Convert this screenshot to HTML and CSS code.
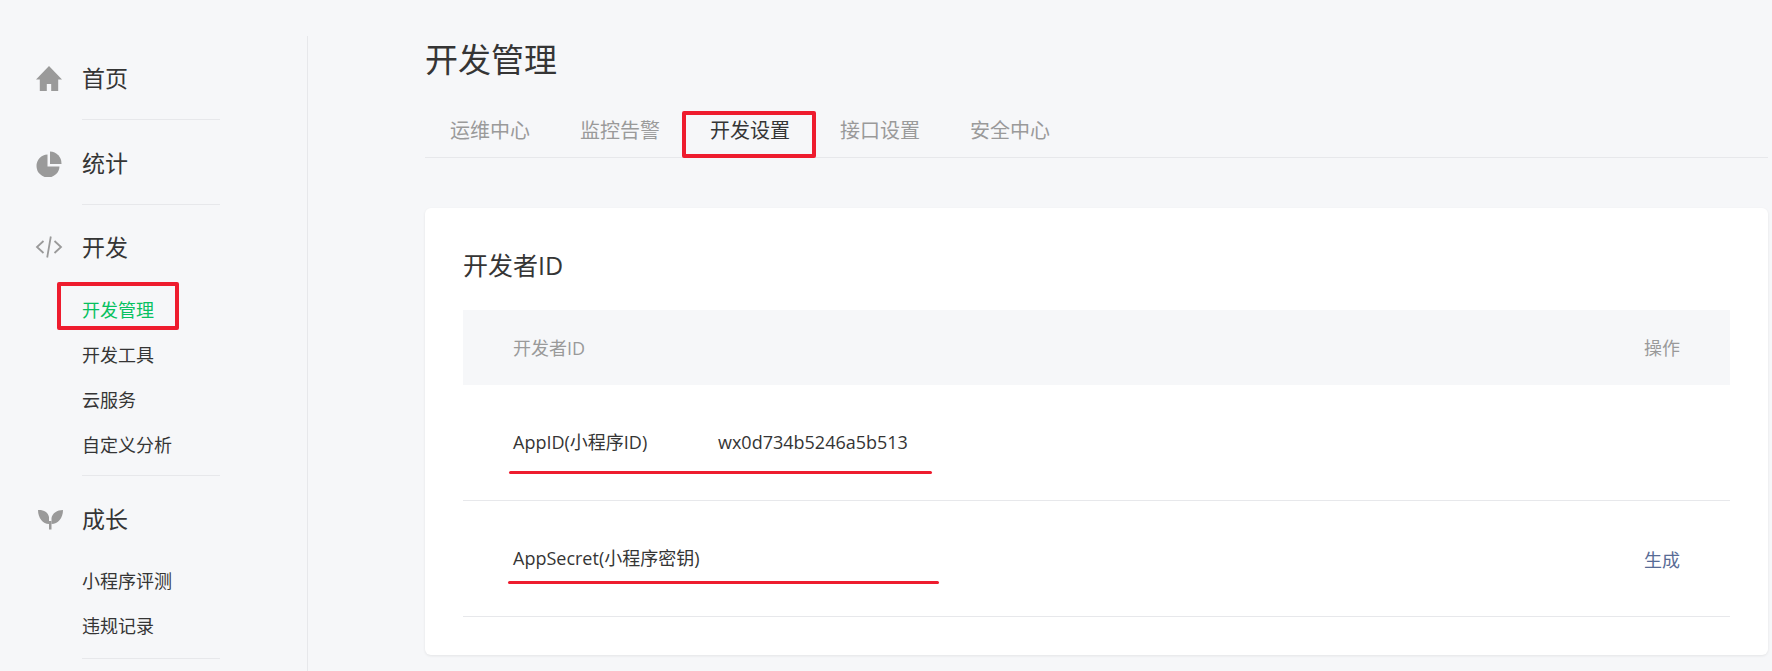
FILE: index.html
```html
<!DOCTYPE html>
<html lang="zh-CN">
<head>
<meta charset="utf-8">
<title>开发管理</title>
<link rel="stylesheet" href="styles.css">
</head>
<body>
<div class="page">
  <aside class="sidebar">
    <section class="nav-group">
      <div class="nav-head">
        <svg class="nav-icon" viewBox="0 0 28 28"><path d="M14 2 1 15.500h3.800V27h7v-7h4.400v7h7V15.500H27z" fill="#9a9a9a"/></svg>
        <span>首页</span>
      </div>
    </section>
    <section class="nav-group">
      <div class="nav-head">
        <svg class="nav-icon" viewBox="0 0 28 28"><path d="M12.500 5.500a11.500 11.500 0 1 0 12 12h-12z" fill="#9a9a9a"/><path d="M15 2.500V15h11.500A12 12 0 0 0 15 2.500z" fill="#9a9a9a"/></svg>
        <span>统计</span>
      </div>
    </section>
    <section class="nav-group">
      <div class="nav-head">
        <svg class="nav-icon" viewBox="0 0 28 28"><path d="M8.500 8 2 14l6.500 6M19.500 8l6.500 6-6.500 6M15.800 3.500l-3.600 21" fill="none" stroke="#9a9a9a" stroke-width="1.800"/></svg>
        <span>开发</span>
      </div>
      <ul class="nav-sub nav-sub-dev">
        <li class="nav-item active">开发管理</li>
        <li class="nav-item">开发工具</li>
        <li class="nav-item">云服务</li>
        <li class="nav-item">自定义分析</li>
      </ul>
    </section>
    <section class="nav-group">
      <div class="nav-head">
        <svg class="nav-icon" viewBox="0 0 28 28"><path d="M3 5C8 4.500 13.200 7 14 12v7C8 19 3 13 3 5zM28 5c-6 0-10.500 3-11.500 8v6C23 19 28 13 28 5z" fill="#9a9a9a"/><rect x="14" y="16" width="2.500" height="8.500" fill="#9a9a9a"/></svg>
        <span>成长</span>
      </div>
      <ul class="nav-sub">
        <li class="nav-item">小程序评测</li>
        <li class="nav-item">违规记录</li>
      </ul>
    </section>
    <div class="mark mark-side"></div>
  </aside>
  <main class="main">
    <h1 class="title">开发管理</h1>
    <nav class="tabs">
      <a class="tab">运维中心</a>
      <a class="tab">监控告警</a>
      <a class="tab current">开发设置<span class="mark mark-tab"></span></a>
      <a class="tab">接口设置</a>
      <a class="tab">安全中心</a>
    </nav>
    <section class="card">
      <h2 class="card-title">开发者ID</h2>
      <div class="table">
        <div class="row row-head"><span>开发者ID</span><span>操作</span></div>
        <div class="row">
          <span class="cell"><span class="label">AppID(小程序ID)</span><span>wx0d734b5246a5b513</span></span>
          <span class="line line-a"></span>
        </div>
        <div class="row">
          <span class="cell">AppSecret(小程序密钥)</span><a class="link">生成</a>
          <span class="line line-b"></span>
        </div>
      </div>
    </section>
  </main>
</div>
</body>
</html>
```
FILE: styles.css
```css
* { box-sizing: border-box; }
html, body { margin: 0; height: 100%; }
body {
  background: #f6f7f9;
  color: #353535;
  font-family: "Open Sans", "Noto Sans CJK SC", sans-serif;
  overflow: hidden;
}
.page { display: flex; height: 671px; overflow: hidden; }

.sidebar {
  position: relative;
  width: 308px;
  flex: none;
  margin-top: 36px;
  padding: 23px 87px 0 82px;
  border-right: 1px solid #e7e8eb;
}
.nav-group { border-bottom: 1px solid #e7e8eb; }
.nav-group:nth-child(1), .nav-group:nth-child(2) { padding-bottom: 20px; margin-bottom: 24px; }
.nav-group:nth-child(2) { margin-bottom: 23px; }
.nav-group:nth-child(3) { padding-bottom: 7px; margin-bottom: 24px; }
.nav-group:nth-child(4) { padding-bottom: 8px; margin-bottom: 24px; }
.nav-head {
  position: relative;
  height: 40px;
  padding-bottom: 2px;
  display: flex;
  align-items: center;
  font-size: 23px;
  line-height: 38px;
}
.nav-icon {
  position: absolute;
  left: -47px;
  top: 5px;
  width: 28px;
  height: 28px;
}
.nav-sub { list-style: none; margin: 19px 0 0; padding: 0; }
.nav-sub-dev { margin-top: 20px; }
.nav-item { height: 45.300px; line-height: 45px; font-size: 18px; }
.nav-sub-dev .nav-item { height: 45px; }
.nav-item.active { color: #07c160; }

.main { flex: 1; min-width: 0; padding: 38px 4px 0 117px; }
.title { margin: 0; font-size: 33px; line-height: 44px; font-weight: 400; }
.tabs {
  display: flex;
  height: 76px;
  padding-top: 22px;
  border-bottom: 1px solid #e7e8eb;
}
.tab {
  position: relative;
  width: 130px;
  height: 53px;
  text-align: center;
  font-size: 20px;
  line-height: 54px;
  color: #9a9a9a;
}
.tab.current { color: #353535; }

.card {
  margin-top: 50px;
  height: 447px;
  padding: 39px 38px 0;
  background: #fff;
  border-radius: 6px;
  box-shadow: 0 1px 3px rgba(0, 0, 0, .08);
}
.card-title { margin: 0 0 27px; font-size: 25px; line-height: 36px; font-weight: 400; }
.row {
  position: relative;
  display: flex;
  justify-content: space-between;
  align-items: center;
  height: 116px;
  padding: 0 50px;
  font-size: 18px;
  border-bottom: 1px solid #e7e8eb;
}
.row-head {
  height: 75px;
  padding-bottom: 2px;
  background: #f6f7f9;
  color: #9a9a9a;
  border-bottom: 0;
}
.row:not(.row-head) .cell { margin-top: -4px; }
.label { display: inline-block; width: 205px; }
.link { color: #576b95; }

.mark { position: absolute; border: 4px solid #ee1c2e; border-radius: 2px; pointer-events: none; }
.mark-side { left: 57px; top: 246px; width: 122px; height: 48px; }
.mark-tab { left: -3px; top: 7px; width: 134px; height: 47px; }
.line { position: absolute; height: 3px; background: #ee1c2e; border-radius: 2px; }
.line-a { left: 46px; top: 86px; width: 423px; }
.line-b { left: 45px; top: 80px; width: 431px; }
```
